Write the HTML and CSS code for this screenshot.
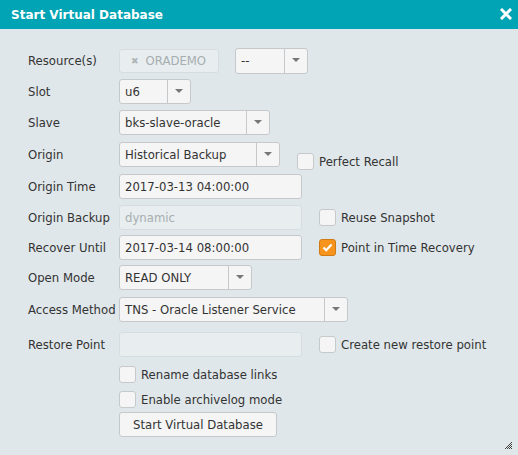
FILE: index.html
```html
<!DOCTYPE html>
<html>
<head>
<meta charset="utf-8">
<link rel="stylesheet" href="styles.css">
</head>
<body>
<div class="dialog">
  <div class="titlebar">
    <span class="title">Start Virtual Database</span>
    <svg class="close" width="12" height="12" viewBox="0 0 12 12"><path d="M2 2 L10 10 M10 2 L2 10" stroke="#fff" stroke-width="3" stroke-linecap="square"/></svg>
  </div>
  <div class="content">
    <div class="row">
      <label class="lbl">Resource(s)</label>
      <div class="tags"><span class="tagx">&#x2716;</span>ORADEMO</div>
      <div class="select w-dash"><span class="val">--</span><span class="arrow"><i></i></span></div>
    </div>
    <div class="row">
      <label class="lbl">Slot</label>
      <div class="select w-slot"><span class="val">u6</span><span class="arrow"><i></i></span></div>
    </div>
    <div class="row">
      <label class="lbl">Slave</label>
      <div class="select w-slave"><span class="val">bks-slave-oracle</span><span class="arrow"><i></i></span></div>
    </div>
    <div class="row r-origin">
      <label class="lbl">Origin</label>
      <div class="select w-origin"><span class="val">Historical Backup</span><span class="arrow"><i></i></span></div>
      <div class="check low"><span class="box"></span><span>Perfect Recall</span></div>
    </div>
    <div class="row r-otime">
      <label class="lbl">Origin Time</label>
      <div class="input">2017-03-13 04:00:00</div>
    </div>
    <div class="row">
      <label class="lbl">Origin Backup</label>
      <div class="input disabled">dynamic</div>
      <div class="check"><span class="box"></span><span>Reuse Snapshot</span></div>
    </div>
    <div class="row r-tight">
      <label class="lbl">Recover Until</label>
      <div class="input">2017-03-14 08:00:00</div>
      <div class="check"><span class="box checked"><svg width="11" height="9" viewBox="0 0 11 9"><path d="M1.5 4.5 L4.2 7.2 L9.5 1.6" fill="none" stroke="#fff" stroke-width="2.2"/></svg></span><span>Point in Time Recovery</span></div>
    </div>
    <div class="row r-tight">
      <label class="lbl">Open Mode</label>
      <div class="select w-mode"><span class="val">READ ONLY</span><span class="arrow"><i></i></span></div>
    </div>
    <div class="row r-access">
      <label class="lbl">Access Method</label>
      <div class="select w-access"><span class="val">TNS - Oracle Listener Service</span><span class="arrow"><i></i></span></div>
    </div>
    <div class="row restore">
      <label class="lbl">Restore Point</label>
      <div class="input disabled"></div>
      <div class="check"><span class="box"></span><span>Create new restore point</span></div>
    </div>
    <div class="row crow first">
      <span class="lbl"></span>
      <div class="check nomargin"><span class="box"></span><span>Rename database links</span></div>
    </div>
    <div class="row crow">
      <span class="lbl"></span>
      <div class="check nomargin"><span class="box"></span><span>Enable archivelog mode</span></div>
    </div>
    <div class="row brow">
      <span class="lbl"></span>
      <button class="btn">Start Virtual Database</button>
    </div>
  </div>
  <svg class="grip" width="8" height="8" viewBox="0 0 8 8">
    <g fill="#444">
      <rect x="6" y="0" width="1" height="1"/>
      <rect x="4" y="2" width="1" height="1"/><rect x="6" y="2" width="1" height="1"/>
      <rect x="5" y="1" width="1" height="1"/>
      <rect x="2" y="4" width="1" height="1"/><rect x="4" y="4" width="1" height="1"/><rect x="6" y="4" width="1" height="1"/>
      <rect x="3" y="3" width="1" height="1"/><rect x="5" y="3" width="1" height="1"/>
      <rect x="0" y="6" width="1" height="1"/><rect x="2" y="6" width="1" height="1"/><rect x="4" y="6" width="1" height="1"/><rect x="6" y="6" width="1" height="1"/>
      <rect x="1" y="5" width="1" height="1"/><rect x="3" y="5" width="1" height="1"/><rect x="5" y="5" width="1" height="1"/>
    </g>
  </svg>
</div>
</body>
</html>
```
FILE: styles.css
```css
html, body {
  margin: 0;
  padding: 0;
}
body {
  font-family: "DejaVu Sans", Verdana, sans-serif;
  font-size: 11.7px;
  color: #333;
}
.dialog {
  position: relative;
  width: 518px;
  height: 455px;
  background: #e0e7ea;
  box-sizing: border-box;
}
.titlebar {
  height: 29px;
  background: #00a4b4;
  display: flex;
  align-items: center;
  justify-content: space-between;
  padding: 0 6px 0 11px;
}
.title {
  color: #fff;
  font-weight: bold;
  font-size: 12px;
  margin-top: 1px;
}
.close {
  margin-top: -2px;
}
.content {
  padding: 19px 0 0 28px;
  display: flex;
  flex-direction: column;
  gap: 6px;
}
.row {
  display: flex;
  align-items: center;
  height: 25px;
}
.r-origin, .r-otime, .r-access {
  margin-top: 1px;
}
.r-tight {
  margin-top: -1px;
}
.lbl {
  width: 91px;
  flex: none;
  white-space: nowrap;
  padding-top: 1px;
}
.select, .input, .tags {
  box-sizing: border-box;
  height: 25px;
  border: 1px solid #c6c9cb;
  border-radius: 3px;
  background: #f5f5f5;
  display: flex;
  align-items: center;
  white-space: nowrap;
}
.select .val {
  flex: 1;
  padding-left: 5px;
  overflow: hidden;
}
.select .arrow {
  width: 22px;
  height: 100%;
  border-left: 1px solid #c6c9cb;
  display: flex;
  align-items: center;
  justify-content: center;
  flex: none;
}
.select .arrow i {
  display: block;
  width: 0;
  height: 0;
  border-left: 4px solid transparent;
  border-right: 4px solid transparent;
  border-top: 4px solid #777;
  margin-top: -2px;
}
.tags {
  width: 100px;
  background: #e8edef;
  border-color: #d6dcdf;
  color: #a6adb1;
  padding-left: 11px;
  height: 24px;
}
.tagx {
  font-size: 9px;
  margin-right: 7px;
  color: #b0b5b8;
}
.w-dash { width: 73px; margin-left: 16px; height: 26px; }
.w-slot { width: 72px; }
.w-slave { width: 151px; }
.w-origin { width: 161px; }
.w-mode { width: 133px; }
.w-access { width: 229px; }
.input {
  width: 183px;
  padding-left: 5px;
}
.input.disabled {
  background: #e8edef;
  border-color: #d6dcdf;
  color: #a6adb1;
}
.check {
  display: flex;
  align-items: center;
  margin-left: 17px;
  white-space: nowrap;
}
.check.low {
  align-self: flex-start;
  margin-top: 11px;
}
.check.nomargin {
  margin-left: 0;
}
.box {
  box-sizing: border-box;
  width: 17px;
  height: 17px;
  border: 1px solid #c6c9cb;
  border-radius: 3px;
  background: #f5f5f5;
  margin-right: 5px;
  display: flex;
  align-items: center;
  justify-content: center;
}
.box.checked {
  background: #f7941d;
  border-color: #d27a12;
}
.restore {
  margin-top: 4px;
}
.crow {
  height: 17px;
}
.crow.first {
  margin-top: 3px;
}
.crow + .crow {
  margin-top: 2px;
}
.brow {
  height: 25px;
  margin-top: -2px;
}
.btn {
  box-sizing: border-box;
  width: 158px;
  height: 25px;
  border: 1px solid #c6c9cb;
  border-radius: 3px;
  background: #f5f5f5;
  font-family: inherit;
  font-size: 11.7px;
  color: #333;
  padding: 0;
}
.grip {
  position: absolute;
  right: 5px;
  bottom: 5px;
}
```
